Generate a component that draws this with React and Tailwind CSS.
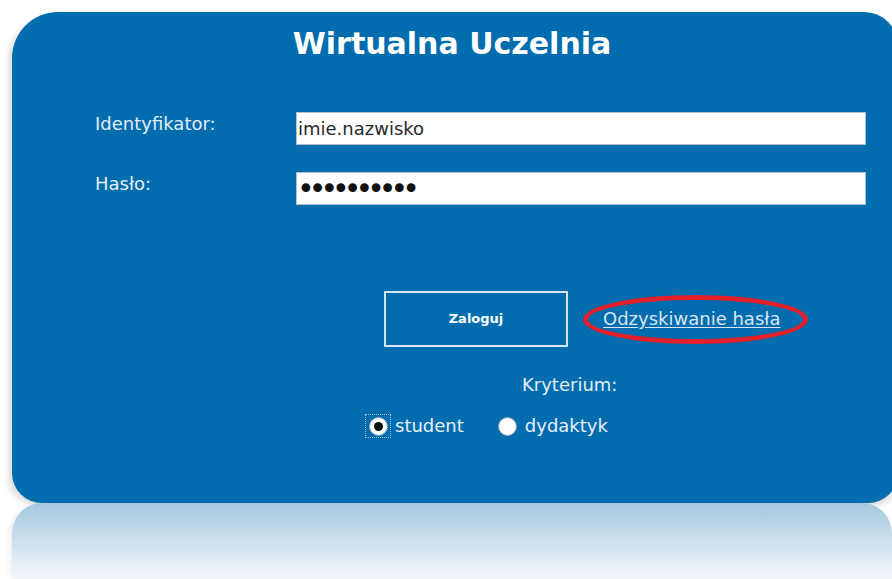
import { useState } from "react";

const Radio = ({ checked, focused, label, onClick }) => {
    return (
        <button type="button" onClick={onClick} className="flex items-center gap-[5px] text-[18px] leading-[24px] text-[#e8f0f7]">
            <span className={`flex items-center justify-center w-[24px] h-[22px] ${focused ? "outline outline-1 outline-dotted outline-[#9fc3e6]" : ""}`}>
                <span className="flex items-center justify-center w-[19px] h-[19px] rounded-full bg-white border border-[#8aa2b8]">
                    {checked ? <span className="w-[9px] h-[9px] rounded-full bg-[#111]"></span> : ""}
                </span>
            </span>
            {label}
        </button>
    );
};

const App = () => {
    const [login, setLogin] = useState("imie.nazwisko");
    const [pass, setPass] = useState("haslo12345");
    const [who, setWho] = useState("student");

    return (
        <div className="w-[892px] h-[579px] overflow-hidden bg-white pt-[12px] pl-[12px]" style={{ fontFamily: '"DejaVu Sans", Verdana, sans-serif' }}>
            <div className="w-[886px] h-[491px] bg-[#016cae] rounded-tl-[46px] rounded-tr-[34px] rounded-bl-[30px] rounded-br-[30px] shadow-[-6px_4px_6px_-2px_rgba(0,0,0,0.13),6px_4px_6px_-2px_rgba(0,0,0,0.13)] flex flex-col pt-[14px]">
                <h1 className="text-center pr-[6px] text-[30px] leading-[36px] font-bold text-white">Wirtualna Uczelnia</h1>

                <div className="mt-[50px] flex items-start">
                    <label className="pl-[83px] w-[284px] text-[18px] leading-[24px] text-[#e4edf6]">Identyfikator:</label>
                    <input
                        value={login}
                        onChange={e => setLogin(e.target.value)}
                        className="w-[570px] h-[33px] bg-white border border-[#b4c2cf] px-[1px] text-[18px] text-[#2a2a2a] outline-none"
                        style={{ fontFamily: '"DejaVu Sans", Verdana, sans-serif' }}
                    />
                </div>

                <div className="mt-[27px] flex items-start">
                    <label className="pl-[83px] w-[284px] text-[18px] leading-[24px] text-[#e4edf6]">Hasło:</label>
                    <input
                        type="password"
                        value={pass}
                        onChange={e => setPass(e.target.value)}
                        className="w-[570px] h-[33px] bg-white border border-[#b4c2cf] pl-[0px] pr-[1px] text-[30px] tracking-[-6px] text-[#111] outline-none"
                        style={{ fontFamily: '"DejaVu Sans", Verdana, sans-serif' }}
                    />
                </div>

                <div className="mt-[86px] pl-[372px] flex items-center gap-[35px]">
                    <button className="w-[184px] h-[56px] border-2 border-[#d7e4f0] text-[13px] font-bold text-white">Zaloguj</button>
                    <div className="relative">
                        <a href="#" className="text-[18px] leading-[24px] text-[#d9e6f2] underline underline-offset-2">Odzyskiwanie hasła</a>
                        <span className="absolute -left-[20px] -right-[28px] -top-[12px] -bottom-[12px] rounded-[50%] border-[5px] border-[#e4202b] pointer-events-none"></span>
                    </div>
                </div>

                <div className="mt-[26px] pl-[510px] text-[18px] leading-[24px] text-[#e4edf6]">Kryterium:</div>

                <div className="mt-[17px] pl-[354px] flex items-center gap-[32px]">
                    <Radio checked={who === "student"} focused label="student" onClick={() => setWho("student")} />
                    <Radio checked={who === "dydaktyk"} label="dydaktyk" onClick={() => setWho("dydaktyk")} />
                </div>
            </div>

            {/* odbicie panelu */}
            <div className="w-[880px] h-[76px] rounded-tl-[30px] rounded-tr-[30px] bg-gradient-to-b from-[#a4c8e0] to-[#f4f7fa] shadow-[-5px_0_5px_-2px_rgba(0,0,0,0.06)]"></div>
        </div>
    );
};

export default App;
